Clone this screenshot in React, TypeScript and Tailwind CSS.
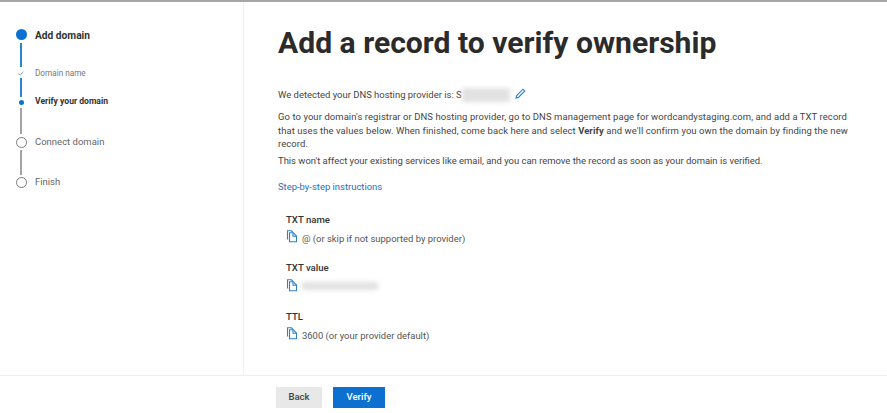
const font = { fontFamily: 'Roboto, "Noto Sans", sans-serif' };

function CopyIcon() {
  return (
    <svg width="12" height="13" viewBox="0 0 12 13" fill="none" stroke="#2f7fc8" strokeWidth="1.1" className="mb-[6px] shrink-0">
      <path d="M1.5 9.5V0.8H5.5L6.7 2" />
      <path d="M3.5 11.8V2.7H7.2L10.5 6V11.8Z" />
      <path d="M7 2.8V6.2H10.3" />
    </svg>
  );
}

function Connector({ h, className }: { h: string; className: string }) {
  return <div className={`w-[2px] ${h} ${className}`} />;
}

function Blur({ className }: { className: string }) {
  return <span className={`inline-block blur-[2px] ${className}`} />;
}

function Field({ label, children }: { label: string; children: React.ReactNode }) {
  return (
    <div className="flex flex-col">
      <div className="text-[9.6px] leading-[14px] font-medium text-[#333]">{label}</div>
      <div className="mt-[6px] flex h-[14px] items-center gap-[4px] text-[#555]">
        <CopyIcon />
        {children}
      </div>
    </div>
  );
}

export default function App() {
  return (
    <div style={font} className="flex h-[413px] w-[887px] flex-col overflow-hidden bg-white text-[9.45px] text-[#444]">
      <div className="h-[2px] shrink-0 bg-[#a6a6a6]" />
      <div className="flex h-[373px] shrink-0">
        <aside className="flex w-[244px] shrink-0 border-r border-[#efefef] pl-[16px] pt-[27px]">
          <div className="flex w-[10px] flex-col items-center">
            <div className="h-[11px] w-[11px] shrink-0 rounded-full bg-[#0b70cf]" />
            <Connector h="h-[24px]" className="mt-[3px] bg-[#2f83cb]" />
            <svg width="6" height="5" viewBox="0 0 6 5" className="mt-[4px] shrink-0" fill="none" stroke="#6aa6dc" strokeWidth="1">
              <path d="M0.5 2.5L2.2 4L5.5 0.8" />
            </svg>
            <Connector h="h-[19px]" className="mt-[2px] bg-[#2f83cb]" />
            <div className="mt-[3px] h-[5px] w-[5px] shrink-0 rounded-full bg-[#0b70cf]" />
            <Connector h="h-[26px]" className="mt-[3px] bg-[#a3a3a3]" />
            <div className="mt-[3px] h-[11px] w-[11px] shrink-0 rounded-full border-[1.5px] border-[#7a7a7a]" />
            <Connector h="h-[25px]" className="mt-[2px] bg-[#a3a3a3]" />
            <div className="mt-[2px] h-[11px] w-[11px] shrink-0 rounded-full border-[1.5px] border-[#7a7a7a]" />
          </div>
          <div className="ml-[9px] flex flex-col">
            <div className="h-[13px] text-[10.2px] leading-[13px] font-bold text-[#333]">Add domain</div>
            <div className="mt-[25px] h-[13px] text-[8.2px] leading-[13px] text-[#777]">Domain name</div>
            <div className="mt-[15px] h-[13px] text-[8.6px] leading-[13px] font-bold text-[#333]">Verify your domain</div>
            <div className="mt-[27px] h-[13px] text-[9.5px] leading-[13px] text-[#666]">Connect domain</div>
            <div className="mt-[27px] h-[13px] text-[9.5px] leading-[13px] text-[#666]">Finish</div>
          </div>
        </aside>
        <main className="flex-1 pl-[34px] pt-[21px]">
          <h1 className="text-[30.1px] leading-[40px] font-bold text-[#2b2b2b]">Add a record to verify ownership</h1>
          <div className="mt-[24px] flex h-[16px] items-center">
            <span>We detected your DNS hosting provider is: S</span>
            <Blur className="h-[14px] w-[48px] bg-[#e2e2e2]" />
            <svg width="11" height="11" viewBox="0 0 11 11" fill="none" stroke="#2f7fc8" strokeWidth="1.1" className="ml-[5px] mb-[4px]">
              <path d="M1 10L1.6 7.6L8 1.2L9.8 3L3.4 9.4Z" />
            </svg>
          </div>
          <p className="mt-[7px] w-[575px] leading-[13.5px] tracking-[0.09px]">
            Go to your domain's registrar or DNS hosting provider, go to DNS management page for wordcandystaging.com, and add a TXT record that uses the values below. When finished, come back here and select <b className="font-bold">Verify</b> and we'll confirm you own the domain by finding the new record.
          </p>
          <p className="mt-[3px] leading-[13px]">This won't affect your existing services like email, and you can remove the record as soon as your domain is verified.</p>
          <a className="mt-[13px] block leading-[13px] text-[#2272b9]">Step-by-step instructions</a>
          <div className="mt-[20px] ml-[8px] flex flex-col gap-[14.5px]">
            <Field label="TXT name"><span>@ (or skip if not supported by provider)</span></Field>
            <Field label="TXT value"><Blur className="mb-[4px] h-[8px] w-[76px] bg-[#e2e2e2]" /></Field>
            <Field label="TTL"><span>3600 (or your provider default)</span></Field>
          </div>
        </main>
      </div>
      <footer className="flex flex-1 items-start gap-[11px] border-t border-[#efefef] pl-[276px] pt-[11px]">
        <button className="h-[21px] w-[46px] bg-[#e8e8e8] text-[9.6px] font-medium text-[#444]">Back</button>
        <button className="h-[21px] w-[52px] bg-[#0b70cf] text-[9.6px] font-medium text-white">Verify</button>
      </footer>
    </div>
  );
}
